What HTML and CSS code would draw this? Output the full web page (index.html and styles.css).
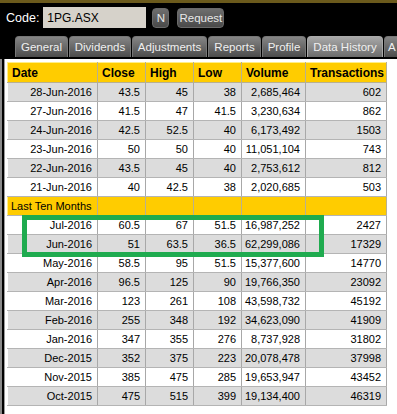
FILE: index.html
```html
<!DOCTYPE html>
<html lang="en">
<head>
    <meta charset="UTF-8">
    <title>1PG.ASX - Data History</title>
    <link rel="stylesheet" href="styles.css">
</head>
<body>
    <!-- Top bar: code lookup + tabs -->
    <div class="topbar">
        <div class="lookup">
            <label for="code">Code:</label>
            <input type="text" id="code" value="1PG.ASX">
            <button class="btn btn-n">N</button>
            <button class="btn btn-request">Request</button>
        </div>
        <div class="tabs">
            <div class="tab" id="tabGeneral">General</div>
            <div class="tab" id="tabDividends">Dividends</div>
            <div class="tab" id="tabAdjustments">Adjustments</div>
            <div class="tab" id="tabReports">Reports</div>
            <div class="tab" id="tabProfile">Profile</div>
            <div class="tab active" id="tabHistory">Data History</div>
            <div class="tab tab-cut">A</div>
        </div>
    </div>

    <!-- Data table -->
    <div class="panel">
        <table class="history">
            <colgroup>
                <col style="width:90px">
                <col style="width:48px">
                <col style="width:48px">
                <col style="width:48px">
                <col style="width:64px">
                <col style="width:81px">
            </colgroup>
            <thead>
                <tr>
                    <th>Date</th><th>Close</th><th>High</th><th>Low</th><th>Volume</th><th>Transactions</th>
                </tr>
            </thead>
            <tbody id="rows"></tbody>
        </table>
        <div class="highlight"></div>
    </div>

    <script>
        let daily = [
            ["28-Jun-2016", "43.5", "45", "38", "2,685,464", "602"],
            ["27-Jun-2016", "41.5", "47", "41.5", "3,230,634", "862"],
            ["24-Jun-2016", "42.5", "52.5", "40", "6,173,492", "1503"],
            ["23-Jun-2016", "50", "50", "40", "11,051,104", "743"],
            ["22-Jun-2016", "43.5", "45", "40", "2,753,612", "812"],
            ["21-Jun-2016", "40", "42.5", "38", "2,020,685", "503"]
        ];
        let monthly = [
            ["Jul-2016", "60.5", "67", "51.5", "16,987,252", "2427"],
            ["Jun-2016", "51", "63.5", "36.5", "62,299,086", "17329"],
            ["May-2016", "58.5", "95", "51.5", "15,377,600", "14770"],
            ["Apr-2016", "96.5", "125", "90", "19,766,350", "23092"],
            ["Mar-2016", "123", "261", "108", "43,598,732", "45192"],
            ["Feb-2016", "255", "348", "192", "34,623,090", "41909"],
            ["Jan-2016", "347", "355", "276", "8,737,928", "31802"],
            ["Dec-2015", "352", "375", "223", "20,078,478", "37998"],
            ["Nov-2015", "385", "475", "285", "19,653,947", "43452"],
            ["Oct-2015", "475", "515", "399", "19,134,400", "46319"]
        ];

        function rowHtml(cells, index) {
            let cls = index % 2 === 0 ? 'alt' : '';
            return `<tr class="${cls}">` + cells.map(c => `<td>${c}</td>`).join('') + '</tr>';
        }

        let html = daily.map(rowHtml).join('');
        html += '<tr class="section"><td>Last Ten Months</td><td></td><td></td><td></td><td></td><td></td></tr>';
        html += monthly.map((r, i) => rowHtml(r, i + 1)).join('');
        document.getElementById('rows').innerHTML = html;
    </script>
</body>
</html>
```

FILE: styles.css
```css
body {
    margin: 0;
    background: #fff;
    font-family: "Liberation Sans", Arial, sans-serif;
}

.topbar {
    background: #000;
    border-top: 3px solid #6b5a1c;
    height: 56px;
}
.lookup {
    display: flex;
    align-items: center;
    padding: 4px 0 0 6px;
    height: 21px;
}
.lookup label {
    color: #fff;
    font-size: 12.5px;
    margin-right: 4px;
}
#code {
    width: 103px;
    height: 21px;
    box-sizing: border-box;
    border: none;
    background: #d6d2ca;
    font-family: "Liberation Sans", Arial, sans-serif;
    font-size: 12px;
    padding: 0 0 0 4px;
    color: #000;
}
.btn {
    height: 20px;
    box-sizing: border-box;
    border: 1px solid #6a6a6a;
    border-radius: 4px;
    background: linear-gradient(#6e6e6e, #4a4a4a);
    color: #e8e8e8;
    font-family: "Liberation Sans", Arial, sans-serif;
    font-size: 11.5px;
    padding: 0;
}
.btn-n {
    width: 17px;
    margin-left: 6px;
}
.btn-request {
    width: 47px;
    margin-left: 8px;
}

.tabs {
    display: flex;
    gap: 1px;
    padding-left: 15px;
    margin-top: 8px;
    overflow: hidden;
}
.tab {
    flex: none;
    height: 21px;
    line-height: 21px;
    box-sizing: border-box;
    border: 1px solid #777;
    border-bottom: none;
    border-radius: 4px 4px 0 0;
    background: linear-gradient(#858585, #4c4c4c);
    color: #f0f0f0;
    font-size: 11.5px;
    text-align: center;
    white-space: nowrap;
}
#tabGeneral { width: 53px; }
#tabDividends { width: 62px; }
#tabAdjustments { width: 75px; }
#tabReports { width: 53px; }
#tabProfile { width: 44px; }
#tabHistory { width: 76px; }
.tab.active {
    background: linear-gradient(#a8a8a8, #6c6c6c);
    border-color: #aaa;
}
.tab-cut {
    width: 30px;
    text-align: left;
    padding-left: 3px;
}

.panel {
    position: relative;
    border-left: 2px solid #8a8a8a;
    box-shadow: inset 2px 0 0 #000, inset 3px 0 0 #9a9a9a;
    padding: 3px 0 8px 5px;
}
.history {
    border-collapse: collapse;
    table-layout: fixed;
    width: 379px;
    font-size: 11px;
}
.history th {
    height: 20px;
    box-sizing: border-box;
    background: #ffcc00;
    border-top: 1px solid #ffee88;
    border-left: 1px solid #ffee88;
    border-right: 1px solid #b8b090;
    border-bottom: 1px solid #b8b090;
    text-align: left;
    font-size: 12px;
    padding: 0 4px;
    white-space: nowrap;
}
.history td {
    height: 19px;
    box-sizing: border-box;
    border-right: 1px solid #a8a8a8;
    border-bottom: 1px solid #b4b4b4;
    border-left: 1px solid #fff;
    text-align: right;
    padding: 0 5px 0 0;
    white-space: nowrap;
    background: #fff;
}
.history tr.alt td {
    background: #dcdcdc;
}
.history tr.section td {
    background: #ffcc00;
    border-left: 1px solid #ffee88;
    border-right: 1px solid #b8b090;
    text-align: left;
    padding-left: 3px;
}

.highlight {
    position: absolute;
    left: 20px;
    top: 156px;
    width: 302px;
    height: 42px;
    box-sizing: border-box;
    border: 5px solid #1fab4f;
}
```
